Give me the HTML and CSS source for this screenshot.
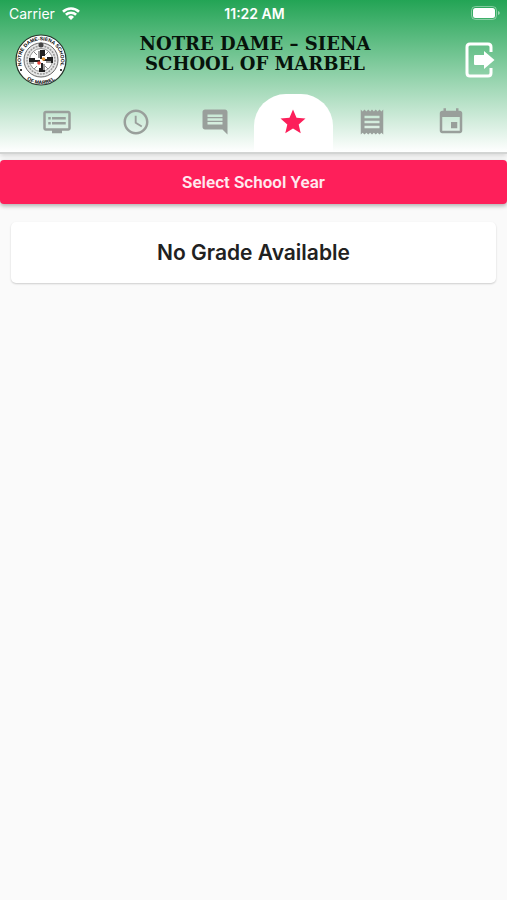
FILE: index.html
```
<!DOCTYPE html>
<html lang="en">

<head>
    <meta charset="UTF-8">
    <meta name="viewport" content="width=device-width, initial-scale=1.0">
    <title>Grades</title>
    <link rel="stylesheet" href="styles.css">
</head>

<body>
    <header class="header">
        <div class="status-bar">
            <div class="carrier">
                <span>Carrier</span>
                <svg class="wifi" viewBox="0 0 18 13" aria-hidden="true">
                    <path d="M1 4.8a11.5 11.5 0 0 1 16 0M3.9 7.8a7.3 7.3 0 0 1 10.2 0" fill="none" stroke="#fff" stroke-width="2.6" />
                    <path d="M9 13 6 10a4.3 4.3 0 0 1 6 0z" fill="#fff" />
                </svg>
            </div>
            <span class="time">11:22 AM</span>
            <svg class="battery" viewBox="0 0 29 14" aria-hidden="true">
                <rect x=".5" y=".5" width="25" height="13" rx="4" fill="none" stroke="#fff" stroke-opacity=".4" />
                <rect x="2" y="2" width="22" height="10" rx="2.5" fill="#fff" />
                <path d="M27 5v4q1.800-.7 1.800-2T27 5z" fill="#fff" fill-opacity=".5" />
            </svg>
        </div>

        <div class="brand">
            <svg class="seal" viewBox="0 0 52 52" aria-hidden="true">
                <defs>
                    <path id="top" d="M8.500 36A20 20 0 1 1 43.500 36" />
                    <path id="bottom" d="M8 42A24 24 0 0 0 44 42" />
                </defs>
                <circle cx="26" cy="26" r="25" fill="#fff" stroke="#26352b" stroke-width="1.200" />
                <circle cx="26" cy="26" r="17" fill="#e8e8e8" stroke="#444" stroke-width=".8" />
                <circle cx="26" cy="26" r="14" fill="none" stroke="#999" stroke-width="1.500" stroke-dasharray="2 1" />
                <circle cx="26" cy="26" r="11.500" fill="#fff" stroke="#666" stroke-width=".7" />
                <path d="M25 16h5v6h-3v3h-2zM14 24h6v2h5v2h-7v2h-4zM32 23h6v6h-3v-2h-7v-2h4zM26 29h2v5h2v4h-6v-4h2z" fill="#222" />
                <path d="M25 17v7h-2v-7zM14 28h5v2h-5zM31 27h5v2h-5zM28 30v6h2v-6z" fill="#999" />
                <path d="M19 18l3 3M33 18l-3 3M19 35l3-3M33 35l-3-3" stroke="#888" />
                <circle cx="28.500" cy="25" r="1.800" fill="#ed9b33" />
                <circle cx="24" cy="29" r="1.800" fill="#e4473e" />
                <circle cx="26" cy="11" r="2.500" fill="#444" />
                <text class="seal-text"><textPath href="#top" startOffset="50%">NOTRE DAME-SIENA SCHOOL</textPath></text>
                <text class="seal-text"><textPath href="#bottom" startOffset="50%">OF MARBEL</textPath></text>
                <circle cx="6" cy="36" r="1" />
                <circle cx="46" cy="36" r="1" />
            </svg>
            <h1>Notre Dame – Siena<br>School of Marbel</h1>
            <button class="logout" type="button" aria-label="Log out">
                <svg viewBox="0 0 30 36" aria-hidden="true">
                    <path d="M26 10V5q0-3-3-3H5Q2 2 2 5v26q0 3 3 3h18q3 0 3-3v-5" fill="none" stroke="#fff" stroke-width="3" />
                    <path d="M10 13h9V9l10.500 9L19 27v-4h-9q-1 0-1-1v-8q0-1 1-1z" fill="#fff" />
                </svg>
            </button>
        </div>

        <nav class="tabs">
            <a href="#announcements" aria-label="Announcements">
                <svg viewBox="0 0 24 24"><path d="M21 3H3c-1.100 0-2 .9-2 2v12c0 1.100.9 2 2 2h5v2h8v-2h5c1.100 0 1.990-.9 1.990-2L23 5c0-1.100-.9-2-2-2zm0 14H3V5h18v12zm-2-9H8v2h11V8zm0 4H8v2h11v-2zM7 8H5v2h2V8zm0 4H5v2h2v-2z" /></svg>
            </a>
            <a href="#schedule" aria-label="Schedule">
                <svg viewBox="0 0 24 24"><path d="M11.990 2C6.470 2 2 6.480 2 12s4.470 10 9.990 10C17.520 22 22 17.520 22 12S17.520 2 11.990 2zM12 20c-4.420 0-8-3.580-8-8s3.580-8 8-8 8 3.580 8 8-3.580 8-8 8zm.5-13H11v6l5.250 3.150.75-1.230-4.500-2.670z" /></svg>
            </a>
            <a href="#messages" aria-label="Messages">
                <svg viewBox="0 0 24 24"><path d="M21.990 4c0-1.100-.89-2-1.990-2H4c-1.100 0-2 .9-2 2v12c0 1.100.9 2 2 2h14l4 4-.01-18zM18 14H6v-2h12v2zm0-3H6V9h12v2zm0-3H6V6h12v2z" /></svg>
            </a>
            <a class="active" href="#grades" aria-label="Grades" aria-current="page">
                <svg viewBox="0 0 24 24"><path d="M12 17.270 18.180 21l-1.640-7.030L22 9.240l-7.190-.61L12 2 9.190 8.630 2 9.240l5.460 4.730L5.820 21z" /></svg>
            </a>
            <a href="#billing" aria-label="Billing">
                <svg viewBox="0 0 24 24"><path d="M18 17H6v-2h12v2zm0-4H6v-2h12v2zm0-4H6V7h12v2zM3 22l1.500-1.500L6 22l1.500-1.500L9 22l1.500-1.500L12 22l1.500-1.500L15 22l1.500-1.500L18 22l1.500-1.500L21 22V2l-1.500 1.500L18 2l-1.500 1.500L15 2l-1.500 1.500L12 2l-1.500 1.500L9 2 7.500 3.500 6 2 4.500 3.500 3 2v20z" /></svg>
            </a>
            <a href="#calendar" aria-label="Calendar">
                <svg viewBox="0 0 24 24"><path d="M17 12h-5v5h5v-5zM16 1v2H8V1H6v2H5c-1.110 0-1.990.9-1.990 2L3 19c0 1.100.89 2 2 2h14c1.100 0 2-.9 2-2V5c0-1.100-.9-2-2-2h-1V1h-2zm3 18H5V8h14v11z" /></svg>
            </a>
        </nav>
    </header>

    <main>
        <button class="select-year" type="button">Select School Year</button>
        <section class="card">
            <h2>No Grade Available</h2>
        </section>
    </main>
</body>

</html>
```
FILE: styles.css
```
* {
    margin: 0;
    padding: 0;
    box-sizing: border-box;
}

body {
    min-height: 100vh;
    font-family: Inter, "Liberation Sans", sans-serif;
    background: #fafafa;
    color: #212121;
}

button {
    border: none;
    background: none;
    cursor: pointer;
}

.header {
    background: linear-gradient(#23a455, #fff);
    border-bottom: 2px solid #d2d4d3;
    box-shadow: 0 2px 5px rgba(0, 0, 0, .14);
}

.status-bar {
    display: grid;
    grid-template-columns: 1fr auto 1fr;
    align-items: center;
    height: 26px;
    padding: 0 7px 0 9px;
    color: #fff;
    font-size: 14px;
}

.carrier {
    display: flex;
    align-items: center;
    gap: 7px;
}

.wifi {
    width: 18px;
    height: 13px;
}

.time {
    font-weight: 600;
}

.battery {
    width: 29px;
    height: 14px;
    justify-self: end;
}

.brand {
    display: grid;
    grid-template-columns: 1fr auto 1fr;
    align-items: center;
    height: 68px;
    padding: 0 12px 0 15px;
}

.seal {
    width: 52px;
    height: 52px;
}

.seal-text {
    font-family: "Liberation Sans", sans-serif;
    font-size: 5px;
    font-weight: bold;
    text-anchor: middle;
}

h1 {
    padding-bottom: 12px;
    color: #07130b;
    font-family: "DejaVu Serif", serif;
    font-size: 18px;
    font-weight: bold;
    line-height: 20px;
    text-align: center;
    text-transform: uppercase;
}

.logout {
    justify-self: end;
}

.logout svg {
    display: block;
    width: 30px;
    height: 36px;
}

.tabs {
    display: flex;
    padding: 0 17px 0 18px;
}

.tabs a {
    display: flex;
    flex: 1;
    align-items: center;
    justify-content: center;
    height: 58px;
    padding-bottom: 2px;
    border-radius: 32px 32px 0 0;
    color: #999f9b;
}

.tabs svg {
    width: 30px;
    height: 30px;
    fill: currentColor;
}

.tabs .active {
    background: #fff;
    color: #fc1f5a;
}

main {
    padding-top: 6px;
}

.select-year {
    display: block;
    width: 100%;
    height: 44px;
    border-radius: 4px;
    background: #fe1f5a;
    box-shadow: 0 2px 4px rgba(0, 0, 0, .3);
    color: #ffe9ef;
    font-family: Roboto, sans-serif;
    font-size: 17px;
    font-weight: 600;
}

.card {
    margin: 18px 11px;
    padding: 18px;
    border-radius: 5px;
    background: #fff;
    box-shadow: 0 1px 2px rgba(0, 0, 0, .18);
    text-align: center;
}

h2 {
    font-size: 21px;
    font-weight: 600;
    line-height: 25px;
}
```
